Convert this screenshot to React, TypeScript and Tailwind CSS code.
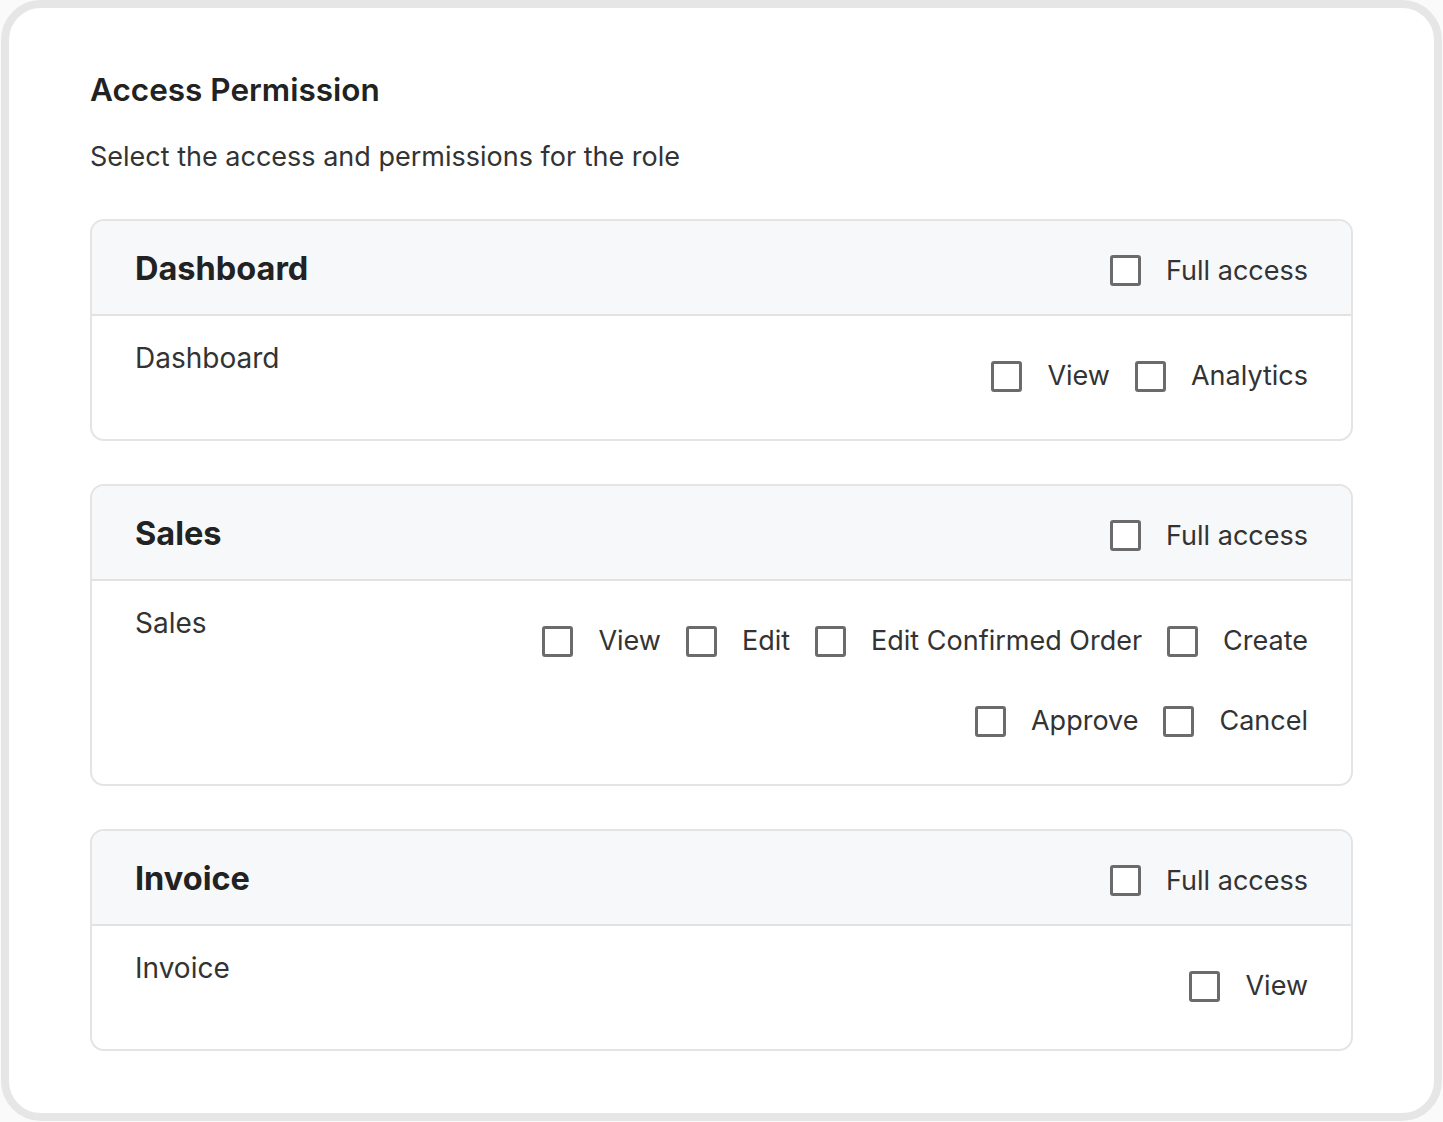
import React from "react";

const font = { fontFamily: "Inter, 'Liberation Sans', sans-serif" };

function Box() {
  return <span className="inline-block w-[31px] h-[31px] shrink-0 rounded-[3px] border-[3px] border-[#6b6b6b] bg-white" />;
}

function Opt({ label }: { label: string }) {
  return (
    <label className="flex items-center gap-[25px] h-[48px]">
      <Box />
      <span className="text-[27px] leading-[36px] text-[#333333]">{label}</span>
    </label>
  );
}

type Section = { title: string; label: string; options: string[] };

const sections: Section[] = [
  { title: "Dashboard", label: "Dashboard", options: ["View", "Analytics"] },
  { title: "Sales", label: "Sales", options: ["View", "Edit", "Edit Confirmed Order", "Create", "Approve", "Cancel"] },
  { title: "Invoice", label: "Invoice", options: ["View"] },
];

function Card({ s }: { s: Section }) {
  return (
    <div className="rounded-[14px] border-2 border-[#e4e4e4] overflow-hidden bg-white">
      <div className="h-[95px] bg-[#f7f8fa] border-b-2 border-[#e2e2e2] flex items-center justify-between px-[43px]">
        <div className="pt-[3px] text-[32.5px] font-bold text-[#222222] leading-[40px]">{s.title}</div>
        <div className="flex items-center gap-[25px] pt-[6px]">
          <Box />
          <span className="text-[27px] leading-[36px] text-[#333333]">Full access</span>
        </div>
      </div>
      <div className="flex justify-between px-[43px] pt-[24px] pb-[39px]">
        <div className="text-[28px] leading-[36px] text-[#333333]">{s.label}</div>
        <div className="mt-[12px] flex flex-wrap justify-end gap-x-[25px] gap-y-[32px] max-w-[820px]">
          {s.options.map((o) => (
            <Opt key={o} label={o} />
          ))}
        </div>
      </div>
    </div>
  );
}

export default function App() {
  return (
    <div className="w-[1443px] h-[1122px] bg-[#fafafa]" style={font}>
      <div className="ml-[1px] w-[1441px] h-[1121px] rounded-[40px] border-[8px] border-[#e6e6e6] bg-white px-[81px] pt-[64px]">
        <h1 className="text-[31.5px] leading-[36px] font-semibold text-[#222222]">Access Permission</h1>
        <p className="mt-[31px] text-[27px] leading-[36px] text-[#333333]">Select the access and permissions for the role</p>
        <div className="mt-[44px] flex flex-col gap-[43px]">
          {sections.map((s) => (
            <Card key={s.title} s={s} />
          ))}
        </div>
      </div>
    </div>
  );
}
